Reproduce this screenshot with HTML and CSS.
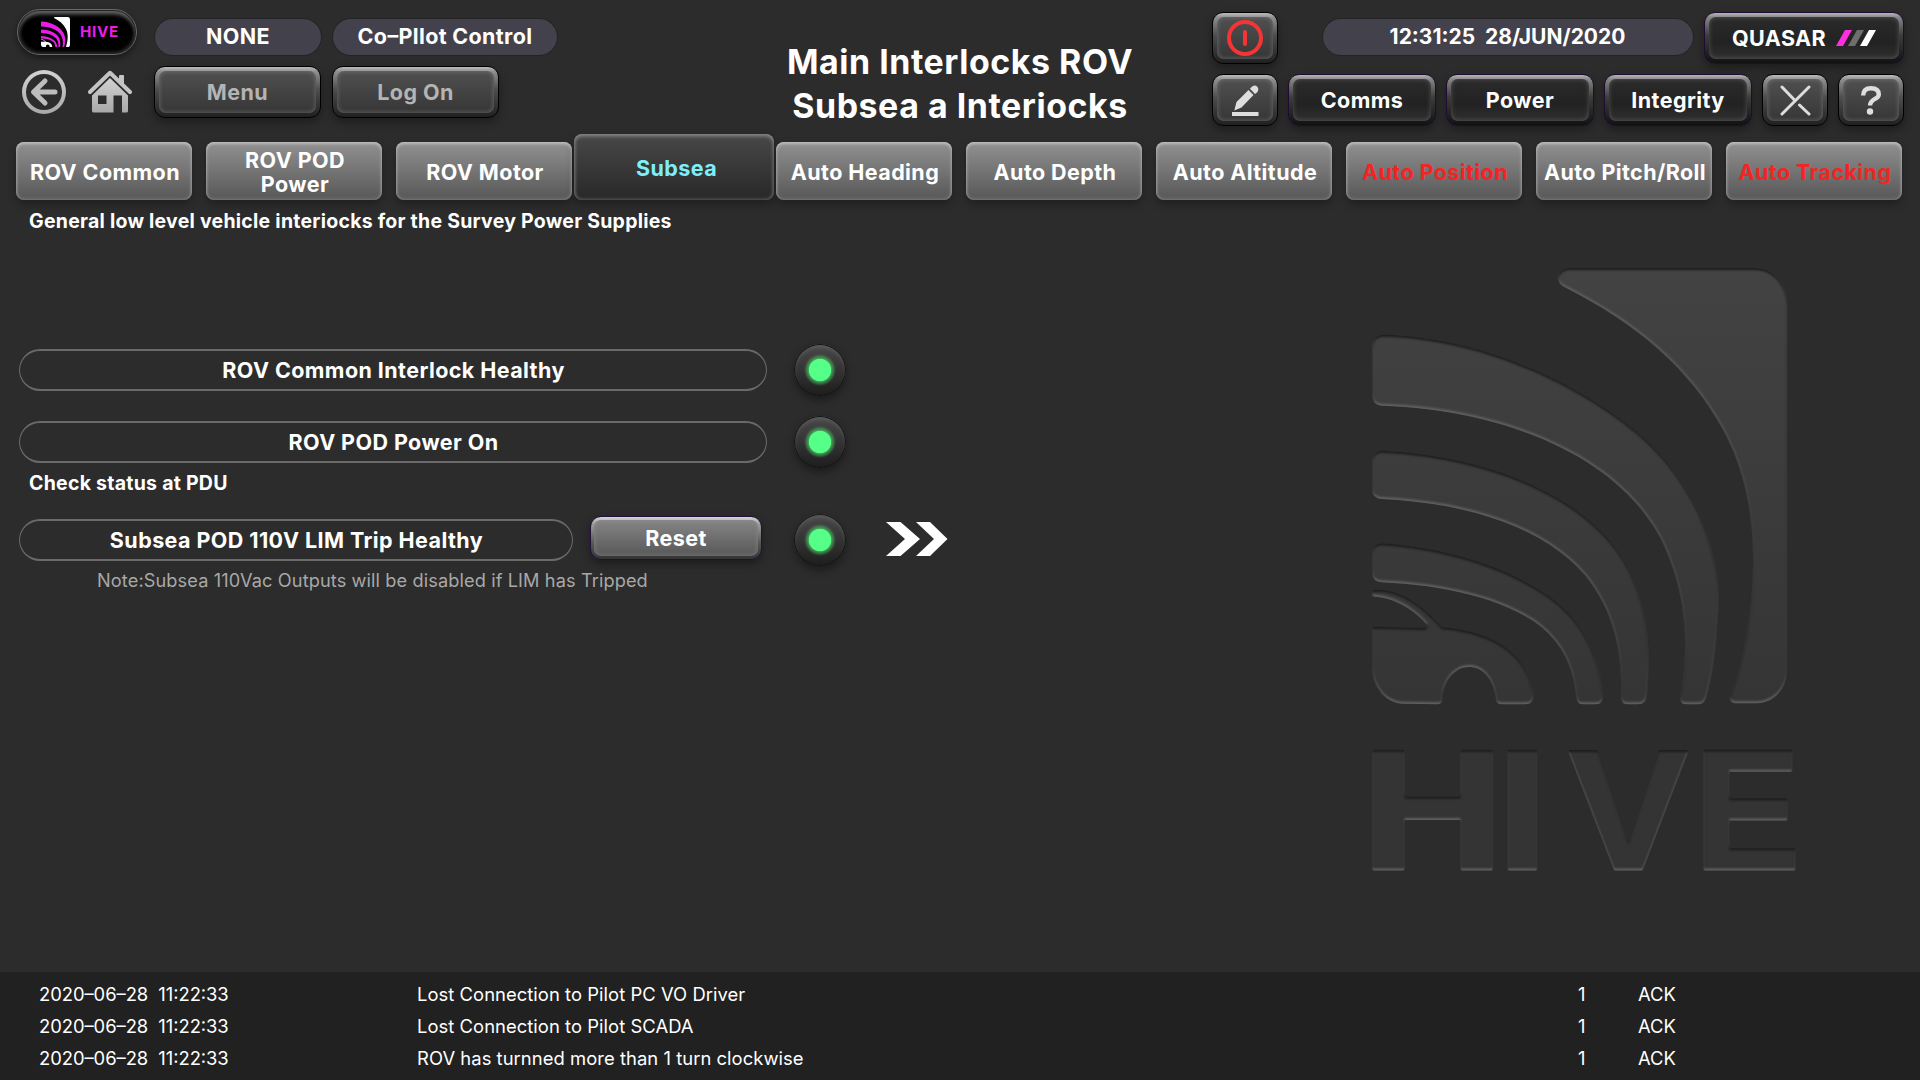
FILE: index.html
```html
<!DOCTYPE html>
<html lang="en">
<head>
<meta charset="utf-8">
<title>Main Interlocks</title>
<link rel="stylesheet" href="styles.css">
</head>
<body>
<svg class="defs" aria-hidden="true">
  <defs>
    <path id="mark-corner" d="M690 84H1245C1300 84 1340 130 1340 190V1290C1340 1350 1300 1390 1245 1390H1190C1172 1390 1166 1378 1172 1364C1215 1240 1240 1110 1240 960C1240 820 1215 690 1150 570C1050 385 890 250 672 140C640 122 655 84 690 84Z"/>
    <g id="mark-arcs">
      <path d="M130 284C400 290 690 410 890 575C1080 735 1150 960 1132 1130C1128 1220 1118 1300 1100 1365Q1094 1393 1076 1393H1040Q1018 1393 1022 1370C1050 1210 1040 1050 960 890C830 650 500 510 125 497Q97 495 97 465V320Q97 286 130 284Z"/>
      <path d="M125 632C480 650 770 790 868 990C925 1110 932 1240 920 1365Q918 1393 895 1393H865Q842 1393 844 1370C848 1230 820 1110 735 1005C620 870 400 790 125 777Q97 775 97 750V660Q97 634 125 632Z"/>
      <path d="M125 910C360 925 570 1010 670 1105C750 1180 780 1275 788 1365Q790 1393 768 1393H730Q710 1393 709 1370C700 1280 670 1215 600 1157C490 1075 310 1035 125 1027Q97 1025 97 1000V940Q97 912 125 910Z"/>
    </g>
    <path id="mark-base" d="M97 1050Q200 1040 305 1162C480 1175 570 1260 580 1365Q580 1393 558 1393H485Q470 1393 469 1380C460 1310 425 1281 387 1281C345 1281 308 1320 306 1380Q305 1393 292 1393L190 1391C130 1390 99 1330 97 1290V1160L255 1164Q262 1160 262 1155Q190 1075 97 1069Z"/>
  </defs>
</svg>

<header class="header">
  <div class="left">
    <div class="row row-top">
      <div class="logo">
        <svg class="logo-mark" viewBox="97 84 1243 1309" preserveAspectRatio="none">
          <g fill="#fff"><use href="#mark-corner"/><use href="#mark-base"/></g>
          <use href="#mark-arcs" fill="#e81ee8"/>
        </svg>
        <span class="logo-name">HIVE</span>
      </div>
      <div class="pill pill-none">NONE</div>
      <div class="pill pill-pilot">Co–Pllot Control</div>
    </div>
    <div class="row row-nav">
      <svg class="back" viewBox="0 0 44 44">
        <defs><linearGradient id="silver" x1="0" y1="0" x2="0" y2="1"><stop offset="0" stop-color="#d2d2d2"/><stop offset="1" stop-color="#a8a8a8"/></linearGradient></defs>
        <path fill="url(#silver)" fill-rule="evenodd" d="M22 0a22 22 0 1 1 0 44a22 22 0 1 1 0-44zM22 4a18 18 0 1 0 0 36a18 18 0 1 0 0-36z"/>
        <path fill="none" stroke="#bdbdbd" stroke-width="5" stroke-linecap="round" stroke-linejoin="round" d="M23 11L11.500 22L23 33M12 22H33"/>
      </svg>
      <svg class="home" viewBox="0 0 44 43">
        <path fill="none" stroke="#c4c4c4" stroke-width="4" stroke-linecap="round" stroke-linejoin="round" d="M2 22L22 2.800L42 22"/>
        <path fill="#c4c4c4" d="M31 7V6q0-1 1-1h3q1 0 1 1v10l-5-5z"/>
        <path fill="url(#silver)" fill-rule="evenodd" d="M22 8L40 25.500V41q0 1.500-1.500 1.500H34V25.500H25.500V42.500H6Q4 42.500 4 41V25.500ZM10 25.500V34H18.500V25.500Z"/>
      </svg>
      <button class="btn btn-nav"><span class="face">Menu</span></button>
      <button class="btn btn-nav"><span class="face">Log On</span></button>
    </div>
  </div>

  <h1 class="title">Main Interlocks ROV<br>Subsea a Interiocks</h1>

  <div class="right">
    <div class="tools">
      <button class="btn btn-icon"><span class="face">
        <svg width="36" height="36" viewBox="0 0 36 36" fill="none" stroke="#f53535"><circle cx="18" cy="18" r="16" stroke-width="4"/><path d="M18 12V24" stroke-width="4" stroke-linecap="round"/></svg>
      </span></button>
      <div class="pill pill-time">12:31:25&nbsp; 28/JUN/2020</div>
      <button class="btn btn-dark btn-quasar"><span class="face">QUASAR
        <svg width="40" height="16" viewBox="0 0 40 16"><path fill="#ff2fe0" d="M9 0H16L7 16H0z"/><path fill="#6e6e6e" d="M21 0H28L19 16H12z"/><path fill="#fff" d="M33 0H40L31 16H24z"/></svg>
      </span></button>
    </div>
    <div class="tools">
      <button class="btn btn-icon"><span class="face">
        <svg width="27" height="31" viewBox="0 0 27 31" fill="#dedede"><path d="M0 27H26.500V31H0zM2.300 25.500L4.500 17L16.500 5L21.500 10L9.500 22.500zM18 3.800L19.500 2Q22.500-1 25.300 1.800Q27.500 4.500 25 7.500L23 9z"/></svg>
      </span></button>
      <button class="btn btn-dark"><span class="face">Comms</span></button>
      <button class="btn btn-dark"><span class="face">Power</span></button>
      <button class="btn btn-dark"><span class="face">Integrity</span></button>
      <button class="btn btn-icon"><span class="face">
        <svg width="31" height="31" viewBox="0 0 31 31" fill="none" stroke="#dedede" stroke-width="3" stroke-linecap="round"><path d="M29 2L2 29M2 2L15 15.500M19.500 20L29 29"/></svg>
      </span></button>
      <button class="btn btn-icon"><span class="face">
        <svg width="20" height="29" viewBox="0 0 20 29" fill="none" stroke="#dedede"><path stroke-width="4.400" d="M2.200 9.500C2.200 4.500 5 2.200 10 2.200S17.800 4.500 17.800 8.500C17.800 13.500 9.300 12.500 9 19.500"/><circle cx="9" cy="25.500" r="3.200" fill="#dedede" stroke="none"/></svg>
      </span></button>
    </div>
  </div>
</header>

<nav class="tabs">
  <a class="tab">ROV Common</a>
  <a class="tab">ROV POD<br>Power</a>
  <a class="tab">ROV Motor</a>
  <a class="tab active">Subsea</a>
  <a class="tab">Auto Heading</a>
  <a class="tab">Auto Depth</a>
  <a class="tab">Auto Altitude</a>
  <a class="tab alert">Auto Position</a>
  <a class="tab">Auto Pitch/Roll</a>
  <a class="tab alert">Auto Tracking</a>
</nav>

<main class="main">
  <section class="content">
    <p class="caption caption-top">General low level vehicle interiocks for the Survey Power Supplies</p>
    <div class="status">
      <div class="label">ROV Common Interlock Healthy</div>
      <i class="led"></i>
    </div>
    <div class="status">
      <div class="label">ROV POD Power On</div>
      <i class="led"></i>
    </div>
    <p class="caption caption-pdu">Check status at PDU</p>
    <div class="status status-trip">
      <div class="label">Subsea POD 110V LIM Trip Healthy</div>
      <button class="btn btn-reset"><span class="face">Reset</span></button>
      <i class="led"></i>
      <svg class="more" viewBox="0 0 62 34" fill="#fff"><path d="M0 0H14.500L34 17L14.500 34H0L19 17zM30 0H44L61.500 17L44 34H30L48 17z"/></svg>
    </div>
    <p class="note">Note:Subsea 110Vac Outputs will be disabled if LIM has Tripped</p>
  </section>
  <svg class="watermark" viewBox="0 0 1440 1980">
    <defs>
      <linearGradient id="slab" gradientUnits="userSpaceOnUse" x1="0" y1="84" x2="0" y2="1393"><stop offset="0" stop-color="#434343"/><stop offset="1" stop-color="#353535"/></linearGradient>
      <filter id="emboss" filterUnits="userSpaceOnUse" x="0" y="0" width="1440" height="1980" color-interpolation-filters="sRGB">
        <feOffset in="SourceAlpha" dy="7" result="down"/>
        <feGaussianBlur in="down" stdDeviation="3" result="downb"/>
        <feFlood flood-color="#1c1c1c"/>
        <feComposite operator="out" in2="downb"/>
        <feComposite operator="in" in2="SourceAlpha" result="dark"/>
        <feOffset in="SourceAlpha" dy="-6" result="up"/>
        <feGaussianBlur in="up" stdDeviation="3" result="upb"/>
        <feFlood flood-color="#626262"/>
        <feComposite operator="out" in2="upb"/>
        <feComposite operator="in" in2="SourceAlpha" result="light"/>
        <feMerge><feMergeNode in="SourceGraphic"/><feMergeNode in="light"/><feMergeNode in="dark"/></feMerge>
      </filter>
    </defs>
    <g filter="url(#emboss)">
      <g fill="url(#slab)">
        <use href="#mark-corner"/><use href="#mark-arcs"/><use href="#mark-base"/>
      </g>
      <g class="wordmark">
        <text transform="translate(62 1888) scale(1.132 .973)">H</text>
        <text transform="translate(472 1888) scale(1.03 .973)">I</text>
        <text transform="translate(686 1888) scale(1.015 .973)">V</text>
        <text transform="translate(1063 1888) scale(.903 .973)">E</text>
      </g>
    </g>
  </svg>
</main>

<footer class="log">
  <div class="entry"><span class="stamp">2020–06–28&nbsp; 11:22:33</span><span>Lost Connection to Pilot PC VO Driver</span><span>1</span><span>ACK</span></div>
  <div class="entry"><span class="stamp">2020–06–28&nbsp; 11:22:33</span><span>Lost Connection to Pilot SCADA</span><span>1</span><span>ACK</span></div>
  <div class="entry"><span class="stamp">2020–06–28&nbsp; 11:22:33</span><span>ROV has turnned more than 1 turn clockwise</span><span>1</span><span>ACK</span></div>
</footer>
</body>
</html>
```
FILE: styles.css
```css
* { box-sizing: border-box; }

body {
  margin: 0;
  width: 1920px;
  height: 1080px;
  overflow: hidden;
  display: flex;
  flex-direction: column;
  background: #2c2c2c;
  color: #fff;
  font: 700 21.500px/24px Inter, "Liberation Sans", sans-serif;
  letter-spacing: .42px;
}

.defs { display: none; }
svg { flex: none; }
p, h1 { margin: 0; }

/* ---------- header ---------- */
.header {
  display: grid;
  grid-template-columns: 1fr auto 1fr;
  height: 134px;
}

.left {
  display: flex;
  flex-direction: column;
  gap: 11px;
  padding-top: 9px;
}

.row { display: flex; align-items: center; }
.row-top { height: 46px; padding-left: 17px; }
.row-nav { height: 52px; padding-left: 22px; align-items: flex-start; }

.logo {
  display: flex;
  align-items: center;
  gap: 10px;
  width: 120px;
  height: 46px;
  margin-right: 18px;
  padding-left: 23px;
  border: 1px solid #6a6a6a;
  border-radius: 23px;
  background: #000;
  box-shadow: inset 0 0 0 1px #222, inset 0 5px 4px -1px #666, inset 0 0 4px 1px #444, 0 3px 6px rgba(0, 0, 0, .45);
}
.logo-mark { width: 29px; height: 30px; }
.logo-name { color: #e81ee8; font-size: 15.200px; letter-spacing: .7px; }

.pill {
  display: grid;
  place-items: center;
  height: 36px;
  border-radius: 18px;
  background: #43414b;
  box-shadow: 0 0 0 1px #242426;
}
.row-top .pill { margin-top: 10px; padding-bottom: 2px; }
.pill-none { width: 166px; margin-right: 12px; }
.pill-pilot { width: 224px; font-feature-settings: "case"; letter-spacing: .35px; }
.pill-time { width: 370px; font-size: 21px; letter-spacing: 0; }

.back { width: 44px; height: 44px; margin: 4px 22px 0 0; }
.home { width: 44px; height: 43px; margin: 4px 22px 0 0; }

.title {
  padding-top: 40px;
  font-size: 33.900px;
  line-height: 44px;
  font-weight: 700;
  letter-spacing: .55px;
  text-align: center;
}

.right {
  display: flex;
  flex-direction: column;
  gap: 10px;
  justify-self: end;
  width: 708px;
  padding: 12px 16px 0 0;
}
.tools { display: flex; justify-content: space-between; align-items: center; height: 52px; }
.tools .pill { margin: -2px 0 0 33px; }

/* ---------- bevelled buttons ---------- */
.btn {
  display: flex;
  width: 148px;
  height: 52px;
  padding: 4px;
  border: 1px solid #000;
  border-radius: 11px;
  background: linear-gradient(#bdbdbd, #8f8f8f 9%, #4d4d4d 45%, #202020);
  box-shadow: 0 4px 8px rgba(0, 0, 0, .35);
  color: inherit;
  font: inherit;
  letter-spacing: inherit;
}
.face {
  flex: 1;
  display: flex;
  align-items: center;
  justify-content: center;
  border-radius: 7px;
  background: linear-gradient(#505050, #363636);
  box-shadow: inset 0 0 5px rgba(150, 150, 150, .55);
}
.btn-nav { width: 167px; margin-right: 11px; color: #b4b4b4; }
.btn-icon { width: 66px; }
.btn-dark { border-color: #1f0b33; background: linear-gradient(#b5b5b5, #858585 9%, #3c3c3c 45%, #121212); }
.btn-dark .face { background: linear-gradient(#2b2b2b, #222 60%, #303030); box-shadow: inset 0 0 5px rgba(130, 130, 130, .5); }
.btn-quasar { width: 200px; }
.btn-quasar .face { gap: 10px; padding-bottom: 1px; }

/* ---------- tabs ---------- */
.tabs {
  display: flex;
  align-items: flex-end;
  gap: 14px;
  height: 66px;
  padding-left: 16px;
}
.tab {
  display: grid;
  place-items: center;
  width: 176px;
  height: 58px;
  border-radius: 8px;
  padding: 2px 0 0 2px;
  text-align: center;
  white-space: nowrap;
  background: linear-gradient(#919191, #575757);
  box-shadow: inset 0 2px 3px rgba(205, 205, 205, .7), inset 0 0 4px rgba(170, 170, 170, .6), 0 4px 8px rgba(0, 0, 0, .3);
}
.tab.active {
  width: 200px;
  height: 66px;
  margin: 0 -12px;
  padding-left: 5px;
  color: #7eeefb;
  background: linear-gradient(#484848, #282828);
  box-shadow: inset 0 2px 4px rgba(190, 190, 190, .5), inset 0 0 4px rgba(150, 150, 150, .55), 0 4px 8px rgba(0, 0, 0, .3);
}
.tab.alert { color: #f22424; }

/* ---------- main ---------- */
.main {
  flex: 1;
  display: flex;
  justify-content: space-between;
}
.content { display: flex; flex-direction: column; align-items: flex-start; }
.caption { padding-left: 29px; font-size: 19.500px; letter-spacing: .25px; }
.caption-top { padding-top: 9px; margin-bottom: 111px; }
.caption-pdu { margin: 3px 0 19px; }

.status { display: flex; align-items: center; height: 52px; padding-left: 19px; }
.status + .status { margin-top: 20px; }
.label {
  display: grid;
  place-items: center;
  width: 748px;
  height: 42px;
  padding-left: 1px;
  border: solid #6a6a6a;
  border-width: 2px 1px;
  border-radius: 21px;
}
.status-trip .label { width: 554px; }
.led {
  width: 52px;
  height: 52px;
  margin-left: 27px;
  border-radius: 50%;
  background: radial-gradient(circle, #55ff88 10.800px, rgba(72, 205, 100, .7) 11.600px, rgba(60, 160, 70, 0) 16px), linear-gradient(#4a4a4a, #1d1d1d);
  box-shadow: inset 0 0 0 1px #141414, inset 0 3px 4px rgba(130, 130, 130, .4), 0 4px 8px rgba(0, 0, 0, .4);
}
.btn-reset {
  width: 172px;
  height: 44px;
  margin: -4px 5px 0 17px;
  padding: 3px;
  border-color: #22103a;
  background: linear-gradient(#d8d8d8, #a0a0a0 15%, #5a5a5a 60%, #333);
}
.btn-reset .face { background: linear-gradient(#858585, #585858); }
.more { width: 62px; height: 34px; margin: -2px 0 0 40px; }
.note { padding: 2px 0 0 97px; font-size: 18.200px; font-weight: 400; letter-spacing: .1px; color: #a8a8a8; }

.watermark { width: 480px; height: 660px; margin: 40px 100px 0 0; }
.wordmark {
  font: 700 527.600px "Liberation Sans", sans-serif;
  letter-spacing: 0;
  fill: #343434;
  stroke: #343434;
  stroke-width: 10px;
  stroke-linejoin: round;
}

/* ---------- event log ---------- */
.log { height: 108px; padding: 6px 0 0 39px; background: #212121; font-size: 18.400px; font-weight: 400; letter-spacing: .05px; }
.entry { display: grid; grid-template-columns: 378px 1161px 60px auto; line-height: 32px; }
.stamp { font-feature-settings: "case"; letter-spacing: -.05px; }
```
